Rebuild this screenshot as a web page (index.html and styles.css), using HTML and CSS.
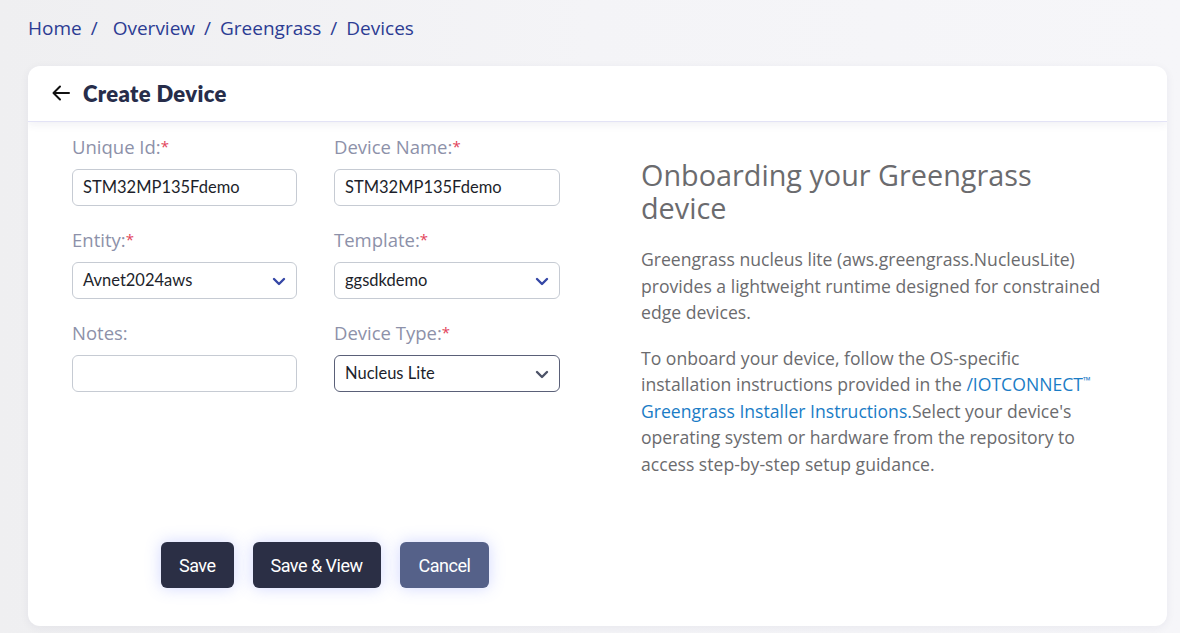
FILE: index.html
```html
<!DOCTYPE html>
<html lang="en">
<head>
<meta charset="utf-8">
<title>Create Device</title>
<link rel="stylesheet" href="styles.css">
</head>
<body>
<nav class="crumbs">
  <a href="#">Home</a><span class="sep first">/</span>
  <a href="#">Overview</a><span class="sep">/</span>
  <a href="#">Greengrass</a><span class="sep">/</span>
  <a href="#">Devices</a>
</nav>
<main class="card">
  <header class="card-head">
    <svg class="back" width="18" height="16" viewBox="0 0 18 16" aria-hidden="true">
      <path d="M17 8H2M8 1.5L1.5 8L8 14.5" fill="none" stroke="#111" stroke-width="2" stroke-linecap="round" stroke-linejoin="round"/>
    </svg>
    <h1>Create Device</h1>
  </header>
  <section class="card-body">
    <div class="form-col">
      <div class="grid">
        <div class="field">
          <label>Unique Id:<span class="req">*</span></label>
          <div class="input">STM32MP135Fdemo</div>
        </div>
        <div class="field">
          <label>Device Name:<span class="req">*</span></label>
          <div class="input">STM32MP135Fdemo</div>
        </div>
        <div class="field">
          <label>Entity:<span class="req">*</span></label>
          <div class="input select">Avnet2024aws
            <svg class="chev" width="14" height="9" viewBox="0 0 14 9"><path d="M2 2L7 7L12 2" fill="none" stroke="#3547a6" stroke-width="2.4" stroke-linecap="round" stroke-linejoin="round"/></svg>
          </div>
        </div>
        <div class="field">
          <label>Template:<span class="req">*</span></label>
          <div class="input select">ggsdkdemo
            <svg class="chev" width="14" height="9" viewBox="0 0 14 9"><path d="M2 2L7 7L12 2" fill="none" stroke="#3547a6" stroke-width="2.4" stroke-linecap="round" stroke-linejoin="round"/></svg>
          </div>
        </div>
        <div class="field">
          <label>Notes:</label>
          <div class="input"></div>
        </div>
        <div class="field">
          <label>Device Type:<span class="req">*</span></label>
          <div class="input select focus">Nucleus Lite
            <svg class="chev" width="14" height="9" viewBox="0 0 14 9"><path d="M2 2L7 7L12 2" fill="none" stroke="#4d5368" stroke-width="2.4" stroke-linecap="round" stroke-linejoin="round"/></svg>
          </div>
        </div>
      </div>
      <div class="actions">
        <button class="btn">Save</button>
        <button class="btn">Save &amp; View</button>
        <button class="btn cancel">Cancel</button>
      </div>
    </div>
    <aside class="info">
      <h2>Onboarding your Greengrass device</h2>
      <p>Greengrass nucleus lite (aws.greengrass.NucleusLite) provides a lightweight runtime designed for constrained edge devices.</p>
      <p>To onboard your device, follow the OS-specific installation instructions provided in the <a href="#">/IOTCONNECT<span class="tm">™</span></a> <a href="#">Greengrass Installer Instructions.</a>Select your device's operating system or hardware from the repository to access step-by-step setup guidance.</p>
    </aside>
  </section>
</main>
</body>
</html>
```
FILE: styles.css
```css
* { box-sizing: border-box; }
html, body { margin: 0; height: 100%; }
body {
  background: linear-gradient(90deg, #efeff1 0%, #f4f4f7 50%, #f6f6f9 100%);
  font-family: "Open Sans", "Lato", sans-serif;
  color: #2a2f45;
  padding: 17px 13px 7px 28px;
  display: flex;
  flex-direction: column;
}
.crumbs {
  font-size: 19px;
  line-height: 22px;
  height: 22px;
  display: flex;
  align-items: center;
}
.crumbs a { color: #2c3c93; text-decoration: none; }
.crumbs .sep { color: #2c3c93; margin: 0 9px 0 9px; }
.crumbs .sep.first { margin-right: 15px; }
.card {
  margin-top: 27px;
  flex: 1;
  background: #fff;
  border-radius: 12px;
  box-shadow: 0 2px 10px rgba(40, 40, 80, 0.06);
  display: flex;
  flex-direction: column;
  overflow: hidden;
}
.card-head {
  height: 56px;
  display: flex;
  align-items: center;
  padding-left: 24px;
  gap: 13px;
  border-bottom: 1px solid #e3e3f6;
  box-shadow: 0 3px 8px rgba(60, 60, 110, 0.07);
  position: relative;
}
.card-head .back { display: block; margin-top: -2px; }
.card-head h1 {
  margin: 0;
  font-family: "Lato", sans-serif;
  font-size: 22px;
  font-weight: 800;
  color: #272d4a;
  letter-spacing: 0.35px;
}
.card-body {
  display: flex;
  padding: 14px 0 0 44px;
}
.form-col { width: 488px; flex: none; }
.grid {
  display: grid;
  grid-template-columns: 225px 226px;
  column-gap: 37px;
  row-gap: 23px;
}
.field label {
  display: block;
  font-size: 18.5px;
  line-height: 22px;
  color: #8d91a9;
  margin-bottom: 11px;
}
.req { color: #e2425a; font-size: 15px; vertical-align: top; position: relative; top: -1px; }
.input {
  height: 37px;
  border: 1px solid #c6cbd3;
  border-radius: 6px;
  padding: 0 10px;
  font-family: "Lato", sans-serif;
  font-size: 16.5px;
  line-height: 35px;
  color: #1d1f2b;
  position: relative;
}
.input.select { padding-right: 30px; }
.input.focus { border-color: #5a6078; }
.chev { position: absolute; right: 10px; top: 14px; }
.actions {
  margin-top: 150px;
  padding-left: 89px;
  display: flex;
  gap: 19px;
}
.btn {
  height: 46px;
  padding: 0 18px;
  border: none;
  border-radius: 6px;
  background: #2b2f45;
  color: #fff;
  font-family: "Roboto", sans-serif;
  font-size: 18px;
  letter-spacing: -0.5px;
  box-shadow: 0 0 16px rgba(90, 110, 255, 0.28);
}
.btn.cancel { background: #556189; padding: 0 19px; }
.info {
  margin-left: 81px;
  width: 468px;
  flex: none;
  padding-top: 22px;
  color: #6b6b6e;
}
.info h2 {
  margin: 0 0 22px;
  font-weight: 400;
  font-size: 28.8px;
  line-height: 33px;
  color: #6b6b6e;
}
.info p {
  margin: 0 0 19px;
  font-size: 17.6px;
  line-height: 26.5px;
}
.info a { color: #1a7cc6; text-decoration: none; display: inline-block; }
.info .tm { font-size: 10px; vertical-align: top; line-height: 18px; }
```
